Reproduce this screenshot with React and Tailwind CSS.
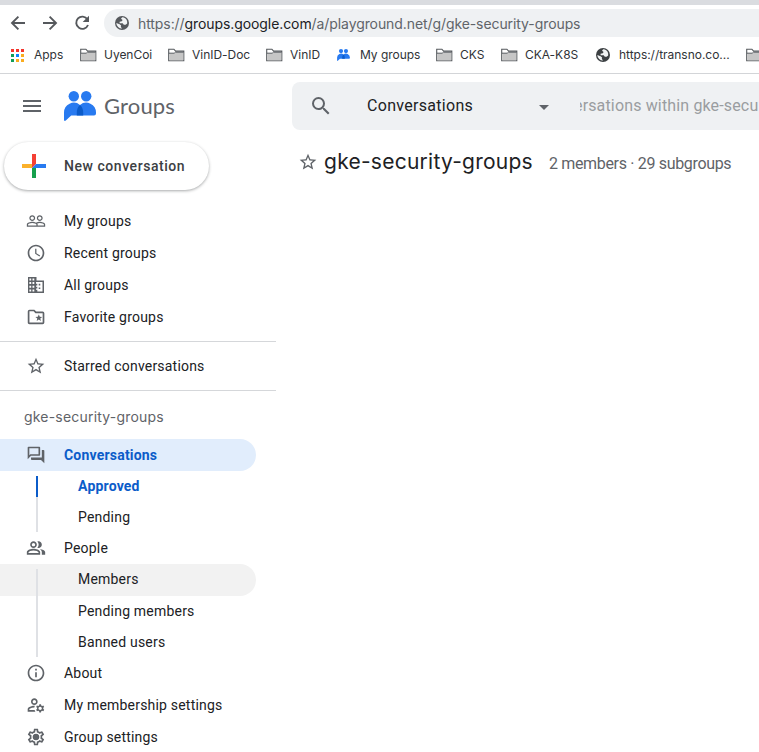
import {
  MdPeopleOutline, MdSchedule, MdStarBorder, MdOutlineQuestionAnswer, MdOutlinePeopleAlt,
  MdInfoOutline, MdOutlineManageAccounts, MdOutlineSettings, MdSearch, MdArrowDropDown, MdMenu,
} from "react-icons/md";

function NavIcon({ d, className }) {
  return (
    <svg className={`h-5 w-5 shrink-0 ${className}`} viewBox="0 0 20 20" fill="none" stroke="#55585c" strokeWidth="1.9">
      <path d={d} />
    </svg>
  );
}

function Reload() {
  return (
    <svg className="ml-3 h-5 w-5 shrink-0" viewBox="0 0 20 20">
      <path d="M15.4 6.3A6.1 6.1 0 1 0 16 12" fill="none" stroke="#55585c" strokeWidth="1.9" />
      <path d="M17 2.8v6.3h-6.3z" fill="#55585c" />
    </svg>
  );
}

function Globe({ className }) {
  return (
    <svg className={className} viewBox="0 0 16 16">
      <circle cx="8" cy="8" r="7" fill="currentColor" />
      <path d="M8.2 2.3 7 3.8l1.6 1.1-.8 1.4-2.2.5v1.4h3.1l1.1 1.5h1.8l1.6-1.3A5.7 5.7 0 0 0 9.9 2.6zM2.3 8.1l3.3 1.1 1.5 1.4-.3 1.4 1.4 1.6A5.7 5.7 0 0 1 2.3 8.1z" fill="#f1f3f4" />
    </svg>
  );
}

function Folder() {
  return (
    <svg className="h-[14px] w-[17px] shrink-0" viewBox="0 0 17 14">
      <path d="M.7 12.8V1.2h5.2l1.7 1.9h8.2v9.7z" fill="#fff" stroke="#55595d" strokeWidth="1.1" />
      <path d="M1.2 5.4h5.2l1.2-1h7.7v7.9H1.2z" fill="#c6c6c6" />
      <path d="M.9 5.2h5.3l1.3-1h8" fill="none" stroke="#55595d" strokeWidth="1" />
    </svg>
  );
}

function GroupsLogo({ className }) {
  return (
    <svg className={className} viewBox="0 0 32 30">
      <circle cx="9.8" cy="5.3" r="5.2" fill="#287af0" />
      <circle cx="22.2" cy="5.3" r="5.2" fill="#287af0" />
      <path d="M0 29V21.5a9.8 9.8 0 0 1 16-7.6 9.8 9.8 0 0 1 16 7.6v1a2 2 0 0 1-2 2H7.2L1.8 29.6Q.4 30.5 0 29z" fill="#287af0" />
      <path d="M16 13.9a9.8 9.8 0 0 1 3.2 7.6v3h-6.4v-3a9.8 9.8 0 0 1 3.2-7.6z" fill="#0b5bc9" />
    </svg>
  );
}

function AppsGrid() {
  return (
    <svg className="h-[13px] w-[13px] shrink-0" viewBox="0 0 13 13">
      <path d="M0 0h3v3H0zM5 0h3v3H5zM10 0h3v3h-3z" fill="#f4342c" />
      <path d="M0 5h3v3H0zM0 10h3v3H0z" fill="#109d58" />
      <path d="M5 5h3v3H5z" fill="#0b84ff" />
      <path d="M10 5h3v3h-3zM5 10h3v3H5zM10 10h3v3h-3z" fill="#faac1e" />
    </svg>
  );
}

function Building({ className }) {
  return (
    <svg className={className} viewBox="0 0 20 20" fill="currentColor">
      <path fillRule="evenodd" d="M2 2h8.5v3.6H18V18H2zM3.4 3.4v2h1.8v-2zm3.1 0v2h1.8v-2zM3.4 7v2h1.8V7zm3.1 0v2h1.8V7zM3.4 10.8v2h1.8v-2zm3.1 0v2h1.8v-2zM3.4 14.5v2h1.8v-2zm3.1 0v2h1.8v-2zM10 7.1v1.7h1.3v1.7H10v1.3h1.3v1.7H10v1.3h1.3v1.7H10v.1h6.5V7.1z" />
      <path d="M12.7 8.8h1.6v1.6h-1.6zM12.7 12.5h1.6v1.6h-1.6z" />
    </svg>
  );
}

function FolderStar({ className }) {
  return (
    <svg className={className} viewBox="0 0 20 20">
      <path d="M2.6 4.4q0-.9.9-.9H8l1.8 1.9h6.8q.9 0 .9.9v9.2q0 .9-.9.9H3.5q-.9 0-.9-.9z" fill="none" stroke="currentColor" strokeWidth="1.7" />
      <path d="m12.8 7.4 1 2.3 2.4.2-1.9 1.6.6 2.4-2.1-1.3-2.1 1.3.6-2.4-1.9-1.6 2.4-.2z" fill="currentColor" />
    </svg>
  );
}

function Gear({ className }) {
  return (
    <span className={`relative ${className}`}>
      <MdOutlineSettings className="h-5 w-5" />
      <span className="absolute left-[7px] top-[7px] h-1.5 w-1.5 rounded-full bg-[#5f6368]" />
    </span>
  );
}

function Bookmark({ icon, children, className }) {
  return (
    <div className={`flex shrink-0 items-center ${className}`}>
      {icon}
      <span className="whitespace-nowrap">{children}</span>
    </div>
  );
}

function Row({ icon: Icon, label, height = "h-8", className = "" }) {
  return (
    <div className={`flex w-64 items-center rounded-r-full pl-[26px] ${height} ${className}`}>
      <Icon className="mr-[18px] h-5 w-5 shrink-0 text-[#5f6368]" />
      <span className="whitespace-nowrap">{label}</span>
    </div>
  );
}

function SubRow({ label, height = "h-[31px]", bar, className = "" }) {
  return (
    <div className={`flex w-64 rounded-r-full pl-9 ${height} ${className}`}>
      <div className={`mr-10 w-0.5 ${bar}`} />
      <span className="self-center whitespace-nowrap">{label}</span>
    </div>
  );
}

function BrowserBar() {
  return (
    <header className="h-[74px] overflow-hidden border-b border-[#d3d5d8] border-t-[5px] border-t-[#dadce0] font-['Inter',sans-serif]">
      <div className="flex h-8 items-center pt-1">
        <NavIcon className="ml-2" d="M17 10H4.3M10.4 3.6 4 10l6.4 6.4" />
        <NavIcon className="ml-3" d="M3 10h12.7M9.6 3.6 16 10l-6.4 6.4" />
        <Reload />
        <div className="ml-3 flex h-7 flex-1 items-center rounded-l-full bg-[#eff1f3] pl-[10px]">
          <Globe className="mr-2 h-4 w-4 text-[#55585c]" />
          <span className="whitespace-nowrap text-[14px] tracking-[-0.085px] text-[#606469]">
            https://<span className="text-[#202124]">groups.google.com</span>/a/playground.net/g/gke-security-groups
          </span>
        </div>
      </div>
      <div className="flex h-9 items-center pl-[11px] text-[12px] tracking-[-0.03px] text-[#303337]">
        <Bookmark className="w-[69px] gap-[10px]" icon={<AppsGrid />}>Apps</Bookmark>
        <Bookmark className="w-[88px] gap-[7px]" icon={<Folder />}>UyenCoi</Bookmark>
        <Bookmark className="w-[98px] gap-[7px]" icon={<Folder />}>VinID-Doc</Bookmark>
        <Bookmark className="w-[71px] gap-[7px]" icon={<Folder />}>VinID</Bookmark>
        <Bookmark className="w-[99px] gap-[10px]" icon={<GroupsLogo className="h-3 w-[13px]" />}>My groups</Bookmark>
        <Bookmark className="w-[65px] gap-[7px]" icon={<Folder />}>CKS</Bookmark>
        <Bookmark className="w-[94px] gap-[7px]" icon={<Folder />}>CKA-K8S</Bookmark>
        <Bookmark className="w-[151px] gap-2" icon={<Globe className="h-4 w-4 text-[#3c4043]" />}>https://transno.co...</Bookmark>
        <Folder />
      </div>
    </header>
  );
}

function Sidebar() {
  return (
    <aside className="w-[276px] shrink-0 text-[14px] tracking-[0.2px] text-[#202124]">
      <div className="flex h-[68px] items-center pb-1 pl-5">
        <MdMenu className="mr-5 h-6 w-6 text-[#5f6368]" />
        <GroupsLogo className="mr-2 h-[30px] w-8" />
        <span className="pb-0.5 font-['Lato',sans-serif] text-[22px] tracking-[0.15px] text-[#5f6368]">Groups</span>
      </div>
      <div className="ml-1 flex h-12 w-[205px] items-center rounded-full pl-[18px] shadow-[0_1px_3px_rgba(60,64,67,0.45)]">
        <svg className="mr-[18px] h-6 w-6" viewBox="0 0 24 24">
          <path d="M10 0h4v10l-4 4z" fill="#f44034" />
          <path d="M0 10h10v4H0z" fill="#fbb12b" />
          <path d="M14 10h10v4H10z" fill="#287af0" />
          <path d="M10 14h4v10h-4z" fill="#16a04d" />
        </svg>
        <span className="whitespace-nowrap font-medium tracking-[0.55px] text-[#3c4043]">New conversation</span>
      </div>
      <nav>
        <div className="h-[152px] border-b border-[#d5d7da] pt-[15px]">
          <Row icon={MdPeopleOutline} label="My groups" />
          <Row icon={MdSchedule} label="Recent groups" />
          <Row icon={Building} label="All groups" />
          <Row icon={FolderStar} label="Favorite groups" />
        </div>
        <div className="h-[49px] border-b border-[#d5d7da] pt-2">
          <Row icon={MdStarBorder} label="Starred conversations" />
        </div>
        <div className="flex h-12 items-center pl-6 pt-[3px] font-['Inter',sans-serif] text-[#5f6368]">gke-security-groups</div>
        <Row icon={MdOutlineQuestionAnswer} label="Conversations" className="bg-[#e1edfc] font-bold text-[#0b5cc9]" />
        <SubRow label="Approved" className="font-bold text-[#0b5cc9]" bar="mt-[5px] h-[21px] bg-[#0b5cc9]" />
        <SubRow label="Pending" bar="-mt-[5px] h-[35px] bg-[#dfe1e5]" />
        <Row icon={MdOutlinePeopleAlt} label="People" height="h-[31px] pb-px" />
        <SubRow label="Members" height="h-8 pb-px" className="bg-[#f2f2f2]" bar="mt-[5px] h-[27px] bg-[#dfe1e5]" />
        <SubRow label="Pending members" bar="h-[31px] bg-[#dfe1e5]" />
        <SubRow label="Banned users" bar="h-[30px] bg-[#dfe1e5]" />
        <Row icon={MdInfoOutline} label="About" height="h-[31px] pb-px" />
        <Row icon={MdOutlineManageAccounts} label="My membership settings" />
        <Row icon={Gear} label="Group settings" />
      </nav>
    </aside>
  );
}

function Main() {
  return (
    <main className="min-w-0 flex-1 pl-4 pt-2">
      <div className="flex h-12 items-center overflow-hidden rounded-l-lg bg-[#eff1f3] pl-[17px] text-[16px]">
        <MdSearch className="mr-[34px] h-6 w-6 shrink-0 text-[#5f6368]" />
        <span className="w-[165px] shrink-0 tracking-[0.3px] text-[#202124]">Conversations</span>
        <MdArrowDropDown className="mr-6 mt-0.5 h-6 w-6 shrink-0 text-[#5f6368]" />
        <div className="flex w-[190px] shrink-0 justify-start overflow-hidden text-[#9a9da0]">
          <span className="-ml-[6px] whitespace-nowrap tracking-[0.15px]">ersations within gke-secu</span>
        </div>
      </div>
      <div className="flex h-16 items-center whitespace-nowrap pl-[6px]">
        <MdStarBorder className="mr-[6px] h-5 w-5 shrink-0 text-[#5f6368]" />
        <h1 className="mr-4 font-['Inter',sans-serif] text-[21px] tracking-[0.25px] text-[#202124]">gke-security-groups</h1>
        <span className="pt-[3px] text-[16px] tracking-[-0.33px] text-[#5f6368]">2 members · 29 subgroups</span>
      </div>
    </main>
  );
}

export default function App() {
  return (
    <div className="h-[752px] w-[759px] overflow-hidden bg-white font-['Roboto',sans-serif]">
      <BrowserBar />
      <div className="flex">
        <Sidebar />
        <Main />
      </div>
    </div>
  );
}
